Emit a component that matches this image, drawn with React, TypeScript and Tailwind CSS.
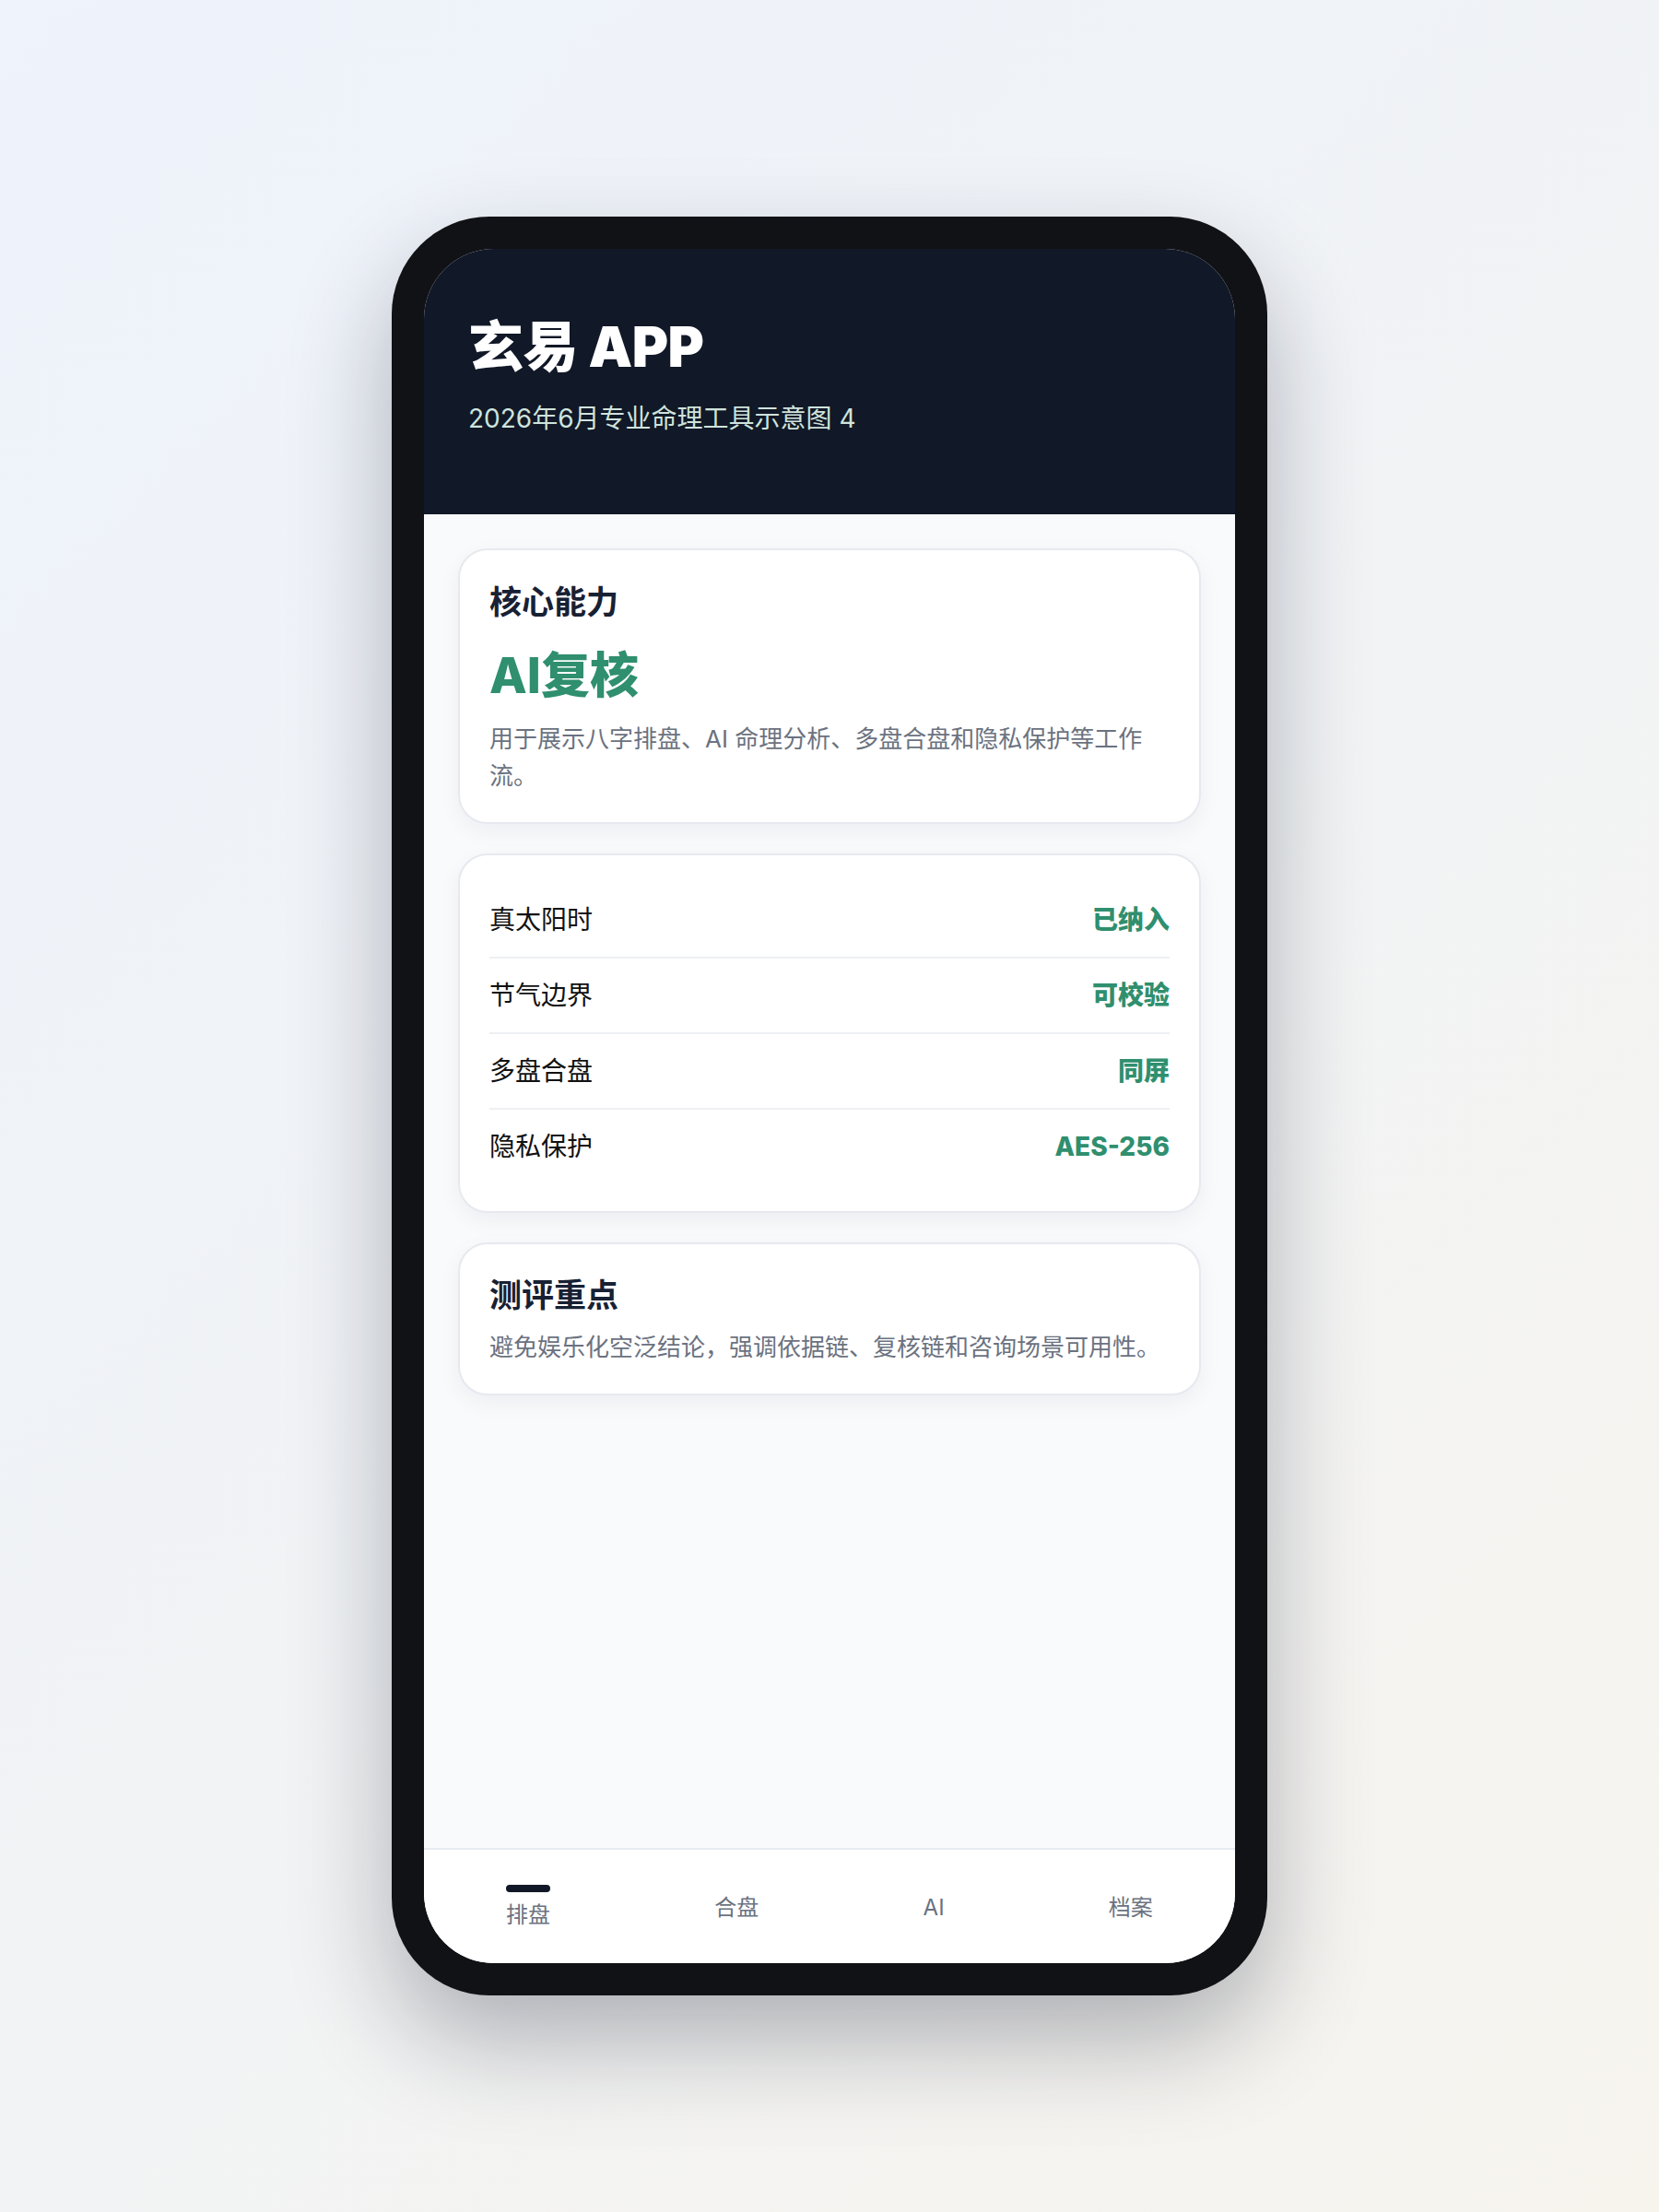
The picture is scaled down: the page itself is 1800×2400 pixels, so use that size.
import React from "react";

const rows = [
  { label: "真太阳时", value: "已纳入" },
  { label: "节气边界", value: "可校验" },
  { label: "多盘合盘", value: "同屏" },
  { label: "隐私保护", value: "AES-256" },
];

export default function App() {
  return (
    <div className="w-full min-h-[2400px] flex items-center justify-center bg-[linear-gradient(135deg,#eef3fc_0%,#f1f3f5_50%,#f7f4ee_100%)] font-['Inter','Noto_Sans_CJK_SC',sans-serif]">
      <div className="w-[950px] h-[1930px] rounded-[106px] bg-[#111216] p-[35px] shadow-[0_50px_110px_rgba(15,23,42,0.3)]">
        <div className="h-full w-full rounded-[76px] overflow-hidden bg-[#f8fafc] flex flex-col">
          <header className="h-[288px] shrink-0 bg-[#111827] px-[48px] pt-[72px]">
            <h1 className="text-[60px] leading-[68px] font-black text-white tracking-[-0.5px]">玄易 APP</h1>
            <p className="mt-[24px] text-[28px] leading-[40px] text-[#cfe3dc]">2026年6月专业命理工具示意图 4</p>
          </header>

          <main className="flex-1 px-[37px] pt-[37px] flex flex-col gap-[32px]">
            <section className="rounded-[32px] border-2 border-[#e7e9ef] bg-white px-[32px] py-[30px] shadow-[0_8px_24px_rgba(15,23,42,0.05)]">
              <h2 className="text-[35px] leading-[52px] font-bold text-[#182133]">核心能力</h2>
              <div className="mt-[21px] text-[53px] leading-[66px] font-extrabold text-[#2f8f6e]">AI复核</div>
              <p className="mt-[16px] text-[26px] leading-[40px] text-[#6b7280]">
                用于展示八字排盘、AI 命理分析、多盘合盘和隐私保护等工作流。
              </p>
            </section>

            <section className="rounded-[32px] border-2 border-[#e7e9ef] bg-white px-[32px] py-[30px] shadow-[0_8px_24px_rgba(15,23,42,0.05)]">
              {rows.map((r, i) => (
                <div
                  key={r.label}
                  className={
                    i < rows.length - 1
                      ? "h-[82px] flex items-center justify-between border-b-2 border-[#eef0f3]"
                      : "h-[80px] flex items-center justify-between"
                  }
                >
                  <span className="text-[28px] text-[#111111]">{r.label}</span>
                  <span className="text-[28px] font-extrabold text-[#2f8f6e]">{r.value}</span>
                </div>
              ))}
            </section>

            <section className="rounded-[32px] border-2 border-[#e7e9ef] bg-white px-[32px] py-[30px] shadow-[0_8px_24px_rgba(15,23,42,0.05)]">
              <h2 className="text-[35px] leading-[50px] font-bold text-[#182133]">测评重点</h2>
              <p className="mt-[11px] text-[26px] leading-[41px] text-[#6b7280]">
                避免娱乐化空泛结论，强调依据链、复核链和咨询场景可用性。
              </p>
            </section>
          </main>

          <nav className="h-[125px] shrink-0 border-t-2 border-[#e8ebf0] bg-white flex justify-around items-center pt-[3px]">
            <div className="flex flex-col items-center">
              <div className="w-[48px] h-[8px] rounded-full bg-[#111827]" />
              <span className="mt-[8px] text-[24px] leading-[34px] text-[#6b7280]">排盘</span>
            </div>
            <span className="text-[24px] leading-[34px] text-[#6b7280]">合盘</span>
            <span className="text-[24px] leading-[34px] text-[#6b7280]">AI</span>
            <span className="text-[24px] leading-[34px] text-[#6b7280]">档案</span>
          </nav>
        </div>
      </div>
    </div>
  );
}
